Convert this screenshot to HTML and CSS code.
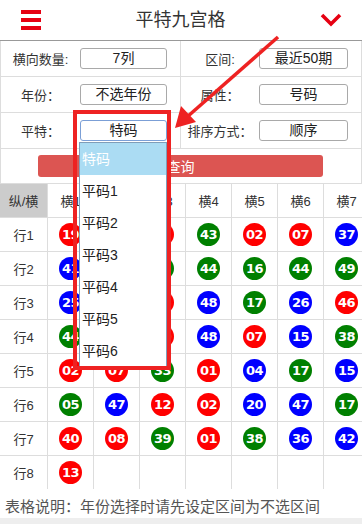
FILE: index.html
```html
<!DOCTYPE html>
<html>
  <head>
    <meta charset="utf-8">
    <title>平特九宫格</title>
    <link rel="stylesheet" href="styles.css">
  </head>
  <body>
    <div class="page">
      <header class="topbar">
        <div class="menu-btn"><span></span><span></span><span></span></div>
        <h1>平特九宫格</h1>
        <svg class="chevron" width="22" height="14" viewBox="0 0 22 14">
          <polyline points="2,2 11,11 20,2" fill="none" stroke="#e60012" stroke-width="3.6"/>
        </svg>
      </header>

      <div class="filters">
        <div class="label">横向数量:</div>
        <div class="field"><div class="box">7列</div></div>
        <div class="label split">区间:</div>
        <div class="field"><div class="box wide">最近50期</div></div>

        <div class="label">年份：</div>
        <div class="field"><div class="box">不选年份</div></div>
        <div class="label split">属性：</div>
        <div class="field"><div class="box wide">号码</div></div>

        <div class="label">平特：</div>
        <div class="field"><div class="box focused">特码</div></div>
        <div class="label split">排序方式：</div>
        <div class="field"><div class="box wide">顺序</div></div>

        <div class="actions"><button class="query-btn">查询</button></div>
      </div>

      <table class="grid-table">
        <tr>
          <th class="corner">纵/横</th>
          <th>横1</th><th>横2</th><th>横3</th><th>横4</th><th>横5</th><th>横6</th><th>横7</th>
        </tr>
        <tr>
          <td>行1</td>
          <td><span class="ball red">19</span></td>
          <td><span class="ball blue">23</span></td>
          <td><span class="ball red">12</span></td>
          <td><span class="ball green">43</span></td>
          <td><span class="ball red">02</span></td>
          <td><span class="ball red">07</span></td>
          <td><span class="ball blue">37</span></td>
        </tr>
        <tr>
          <td>行2</td>
          <td><span class="ball blue">41</span></td>
          <td><span class="ball red">18</span></td>
          <td><span class="ball green">33</span></td>
          <td><span class="ball green">44</span></td>
          <td><span class="ball green">16</span></td>
          <td><span class="ball green">44</span></td>
          <td><span class="ball green">49</span></td>
        </tr>
        <tr>
          <td>行3</td>
          <td><span class="ball blue">25</span></td>
          <td><span class="ball green">22</span></td>
          <td><span class="ball red">35</span></td>
          <td><span class="ball blue">48</span></td>
          <td><span class="ball green">17</span></td>
          <td><span class="ball blue">26</span></td>
          <td><span class="ball red">46</span></td>
        </tr>
        <tr>
          <td>行4</td>
          <td><span class="ball green">44</span></td>
          <td><span class="ball blue">09</span></td>
          <td><span class="ball red">30</span></td>
          <td><span class="ball blue">48</span></td>
          <td><span class="ball red">07</span></td>
          <td><span class="ball blue">15</span></td>
          <td><span class="ball green">38</span></td>
        </tr>
        <tr>
          <td>行5</td>
          <td><span class="ball red">02</span></td>
          <td><span class="ball red">07</span></td>
          <td><span class="ball green">33</span></td>
          <td><span class="ball red">01</span></td>
          <td><span class="ball blue">04</span></td>
          <td><span class="ball green">17</span></td>
          <td><span class="ball blue">15</span></td>
        </tr>
        <tr>
          <td>行6</td>
          <td><span class="ball green">05</span></td>
          <td><span class="ball blue">47</span></td>
          <td><span class="ball red">12</span></td>
          <td><span class="ball red">02</span></td>
          <td><span class="ball blue">20</span></td>
          <td><span class="ball blue">47</span></td>
          <td><span class="ball green">17</span></td>
        </tr>
        <tr>
          <td>行7</td>
          <td><span class="ball red">40</span></td>
          <td><span class="ball red">08</span></td>
          <td><span class="ball green">39</span></td>
          <td><span class="ball red">01</span></td>
          <td><span class="ball green">38</span></td>
          <td><span class="ball blue">36</span></td>
          <td><span class="ball blue">42</span></td>
        </tr>
        <tr class="last">
          <td>行8</td>
          <td><span class="ball red">13</span></td>
          <td></td><td></td><td></td><td></td><td></td><td></td>
        </tr>
      </table>

      <p class="note">表格说明：年份选择时请先设定区间为不选区间</p>

      <!-- open select list -->
      <ul class="select-list">
        <li class="active">特码</li>
        <li>平码1</li>
        <li>平码2</li>
        <li>平码3</li>
        <li>平码4</li>
        <li>平码5</li>
        <li>平码6</li>
      </ul>

      <!-- annotation -->
      <div class="callout"></div>
      <svg class="arrow" width="362" height="524" viewBox="0 0 362 524">
        <line x1="278" y1="37" x2="187" y2="117" stroke="#ee2222" stroke-width="3.5"/>
        <polygon points="175,128 181,106 196,122" fill="#ee2222"/>
      </svg>
    </div>
  </body>
</html>
```

FILE: styles.css
```css
body {
  margin: 0;
  background: #eeeeee;
  font-family: "Liberation Sans", "Noto Sans CJK SC", sans-serif;
  color: #333;
}
.page {
  position: relative;
  width: 362px;
  height: 518px;
  background: #fff;
  overflow: hidden;
}
.topbar {
  height: 40px;
  border-bottom: 1px solid #999;
  display: flex;
  align-items: center;
  padding: 0 20px 0 21px;
}
.menu-btn {
  width: 20px;
  display: flex;
  flex-direction: column;
  gap: 4px;
}
.menu-btn span {
  display: block;
  height: 4px;
  background: #e60012;
}
.topbar h1 {
  flex: 1;
  margin: 0;
  text-align: center;
  font-size: 18px;
  font-weight: normal;
  color: #333;
  line-height: 40px;
}
.chevron {
  display: block;
}

.filters {
  display: grid;
  grid-template-columns: 79px 100px 79px 1fr;
  grid-template-rows: 36px 36px 36px 34px;
  border-left: 1px solid #ddd;
  border-right: 1px solid #ddd;
}
.label,
.field {
  border-bottom: 1px solid #ddd;
  display: flex;
  align-items: center;
}
.label {
  justify-content: center;
  font-size: 13px;
  color: #333;
}
.label.split {
  border-left: 1px solid #ddd;
}
.box {
  width: 87px;
  height: 21px;
  box-sizing: border-box;
  border: 1px solid #a9a9a9;
  border-radius: 3px;
  text-align: center;
  font-size: 14px;
  line-height: 19px;
  color: #222;
}
.box.wide {
  width: 89px;
}
.box.focused {
  border-color: #7b9fd6;
}
.actions {
  grid-column: 1 / -1;
  padding-left: 37px;
  padding-top: 6px;
}
.query-btn {
  display: block;
  width: 285px;
  height: 22px;
  border: none;
  border-radius: 3px;
  background: #dc5552;
  color: #fff;
  font-family: inherit;
  font-size: 14px;
  padding: 0;
}

.grid-table {
  width: 362px;
  border-collapse: collapse;
  table-layout: fixed;
}
.grid-table th,
.grid-table td {
  border: 1px solid #ddd;
  height: 33px;
  padding: 0;
  text-align: center;
  font-size: 13px;
  font-weight: normal;
  color: #333;
}
.grid-table th {
  width: 45px;
}
.grid-table th.corner {
  width: 47px;
  background: #cccccc;
}
.grid-table tr > :first-child {
  border-left: none;
}
.grid-table tr > :last-child {
  border-right: none;
}
.grid-table tr.last td {
  border-bottom: none;
}
.ball {
  display: inline-block;
  width: 23px;
  height: 23px;
  border-radius: 50%;
  color: #fff;
  font-family: "DejaVu Sans", sans-serif;
  font-weight: bold;
  font-size: 13px;
  line-height: 23px;
  letter-spacing: -0.5px;
  vertical-align: middle;
}
.ball.red {
  background: #ff0000;
}
.ball.blue {
  background: #0000ff;
}
.ball.green {
  background: #008000;
}

.note {
  margin: 0;
  padding: 8px 0 0 5px;
  font-size: 15px;
  color: #555;
  line-height: 20px;
}

.select-list {
  position: absolute;
  left: 79px;
  top: 142px;
  width: 88px;
  margin: 0;
  padding: 0;
  list-style: none;
  background: #fff;
  border: 1px solid #7f9db9;
  box-sizing: border-box;
}
.select-list li {
  height: 32px;
  line-height: 32px;
  padding-left: 2px;
  font-size: 14px;
  color: #222;
}
.select-list li.active {
  background: #abdcf3;
  color: #fff;
}
.callout {
  position: absolute;
  left: 73px;
  top: 110px;
  width: 98px;
  height: 260px;
  box-sizing: border-box;
  border: 4px solid #ee2222;
}
.arrow {
  position: absolute;
  left: 0;
  top: 0;
  pointer-events: none;
}
```
